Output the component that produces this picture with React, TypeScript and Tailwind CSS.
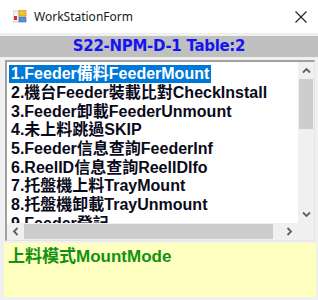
import React from 'react';

const items = [
  '1.Feeder備料FeederMount',
  '2.機台Feeder裝載比對CheckInstall',
  '3.Feeder卸載FeederUnmount',
  '4.未上料跳過SKIP',
  '5.Feeder信息查詢FeederInf',
  '6.ReelID信息查詢ReelIDIfo',
  '7.托盤機上料TrayMount',
  '8.托盤機卸載TrayUnmount',
  '9.Feeder登記',
];

const Chevron: React.FC<{ dir: 'up' | 'down' | 'left' | 'right' }> = ({ dir }) => {
  const rot = { up: 0, right: 90, down: 180, left: 270 }[dir];
  return (
    <svg width="9" height="9" viewBox="0 0 9 9" style={{ transform: `rotate(${rot}deg)` }}>
      <path d="M1 6.5 L4.5 3 L8 6.5" fill="none" stroke="#606060" strokeWidth="1.8" />
    </svg>
  );
};

const AppIcon = () => (
  <svg width="14" height="13" viewBox="0 0 14 13">
    <rect x="0" y="1" width="6" height="11" fill="#f4f4f4" stroke="#b0b0b0" strokeWidth="0.6" />
    <rect x="1" y="6" width="3" height="4" fill="#d03030" />
    <rect x="6" y="0" width="7" height="6" fill="#f2c230" stroke="#c08a10" strokeWidth="0.6" />
    <rect x="6" y="7" width="7" height="5" fill="#5a8fd8" stroke="#3a6ab0" strokeWidth="0.6" />
  </svg>
);

export default function App() {
  return (
    <div className="w-[318px] h-[300px] bg-[#f0f0f0] overflow-hidden flex flex-col font-['Liberation_Sans','Noto_Sans_CJK_TC',sans-serif]">
      {/* Title bar */}
      <div className="h-[33px] bg-white flex items-center pl-[13px] pr-[8px] shrink-0">
        <AppIcon />
        <span className="ml-[7px] text-[12px] text-[#1a1a1a] font-['Noto_Sans',sans-serif]">WorkStationForm</span>
        <div className="ml-auto w-[14px] h-[14px] mr-[2px]">
          <svg width="14" height="14" viewBox="0 0 14 14">
            <path d="M1.5 1.5 L12.5 12.5 M12.5 1.5 L1.5 12.5" stroke="#222" strokeWidth="1.1" />
          </svg>
        </div>
      </div>

      {/* Station header */}
      <div className="mt-[3px] h-[21px] bg-[#c0c0c0] flex items-center justify-center shrink-0">
        <span className="text-[15px] font-bold text-[#1414f0] leading-none font-['DejaVu_Sans',sans-serif] tracking-[-0.3px]">
          S22-NPM-D-1 Table:2
        </span>
      </div>

      {/* List box */}
      <div className="mt-[3px] ml-[5px] mr-[3px] h-[181px] border-t-2 border-l-2 border-t-[#a0a0a0] border-l-[#a0a0a0] border-r border-b border-r-[#e3e3e3] border-b-[#e3e3e3] flex flex-col shrink-0">
        <div className="flex flex-1 min-h-0">
          <div className="flex-1 bg-white overflow-hidden pt-[3px] pl-[2px]">
            {items.map((t, i) => (
              <div key={i} className="h-[18.7px] flex items-center">
                <span
                  className={
                    'px-[2px] h-[18px] flex items-center whitespace-nowrap text-[16px] font-bold ' +
                    (i === 0 ? 'bg-[#0078d7] text-white' : 'text-[#0a0a1a]')
                  }
                >
                  {t}
                </span>
              </div>
            ))}
          </div>
          <div className="w-[16px] bg-[#f0f0f0] flex flex-col">
            <div className="h-[17px] flex items-center justify-center"><Chevron dir="up" /></div>
            <div className="h-[50px] mx-[1px] bg-[#cdcdcd]" />
            <div className="flex-1" />
            <div className="h-[17px] flex items-center justify-center"><Chevron dir="down" /></div>
          </div>
        </div>
        <div className="h-[17px] flex bg-[#f0f0f0]">
          <div className="w-[17px] flex items-center justify-center"><Chevron dir="left" /></div>
          <div className="w-[249px] my-[1px] bg-[#cdcdcd]" />
          <div className="flex-1" />
          <div className="w-[17px] flex items-center justify-center"><Chevron dir="right" /></div>
          <div className="w-[16px]" />
        </div>
      </div>

      {/* Mode panel */}
      <div className="mt-[2px] ml-[4px] mr-[2px] h-[54px] bg-[#ffffc0] pl-[4px] pt-[1px] shrink-0">
        <span className="text-[17px] font-bold text-[#129212]">上料模式MountMode</span>
      </div>
    </div>
  );
}
